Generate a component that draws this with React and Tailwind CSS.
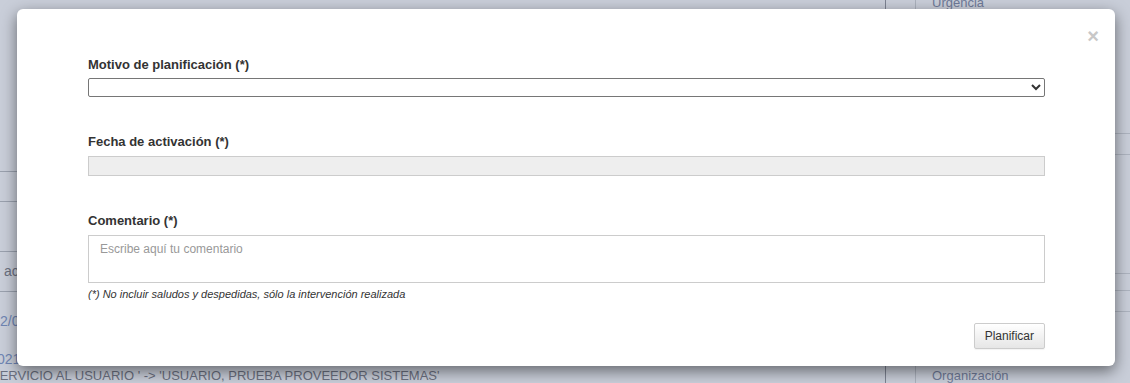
export default function App() {
  return (
    <div className="relative w-[1130px] h-[383px] overflow-hidden bg-[#c9ced9] font-['Liberation_Sans',Arial,sans-serif]">
      {/* page under the overlay */}
      <div className="flex h-full">
        <div className="w-[886px] flex flex-col border-r border-[#7c8291] text-[13px] text-[#6b7080]">
          <div className="h-[173px] border-b border-[#9aa1ae]" />
          <div className="h-[31px] border-b border-[#9aa1ae]" />
          <div className="h-[50px] border-b border-[#9aa1ae]" />
          <div className="h-[40px] border-b border-[#9aa1ae] flex items-center pl-[4px] text-[14px]">ac</div>
          <div className="h-[78px] flex flex-col text-[14px] text-[#6f85b3]">
            <div className="pt-[22px] leading-[14px]">2/0</div>
            <div className="pt-[24px] leading-[14px] ml-[-3px]">021</div>
          </div>
          <div className="ml-[-9px] leading-[14px] text-[13px] whitespace-nowrap">SERVICIO AL USUARIO ' -&gt; 'USUARIO, PRUEBA PROVEEDOR SISTEMAS'</div>
        </div>
        <div className="w-[30px] border-r border-[#aab0bc]" />
        <div className="flex-1 flex flex-col text-[13px] text-[#6f7a98]">
          <div className="pl-[16px] mt-[-4px] leading-[14px]">Urgencia</div>
          <div className="h-[126px] border-b border-[#adb3bf]" />
          <div className="h-[22px] border-b border-[#adb3bf]" />
          <div className="h-[121px] border-b border-[#adb3bf]" />
          <div className="h-[18px] border-b border-[#adb3bf]" />
          <div className="h-[21px] border-b border-[#adb3bf]" />
          <div className="pl-[16px] mt-[57px] leading-[14px]">Organización</div>
        </div>
      </div>

      {/* modal */}
      <div className="absolute inset-0">
        <div className="ml-[17px] mt-[9px] w-[1098px] h-[357px] bg-white rounded-[6px] shadow-[0_5px_15px_rgba(0,0,0,0.5)] relative">
          <button className="absolute right-[16px] top-[17px] text-[20px] font-bold leading-none text-[#c8c8c8]">×</button>
          <div className="pl-[71px] pr-[70px] pt-[47px] text-[#333]">
            <label className="block text-[13px] font-bold leading-[17px]">Motivo de planificación (*)</label>
            <select className="mt-[5px] block w-full h-[19px] border border-[#767676] rounded-[2px] text-[12px] bg-white" />

            <label className="block mt-[36px] text-[13px] font-bold leading-[17px]">Fecha de activación (*)</label>
            <div className="mt-[6px] h-[20px] w-full bg-[#eeeeee] border border-[#cccccc]" />

            <label className="block mt-[36px] text-[13px] font-bold leading-[17px]">Comentario (*)</label>
            <textarea
              className="mt-[6px] block w-full h-[48px] border border-[#cccccc] px-[11px] py-[6px] text-[12px] leading-[14px] resize-none placeholder:text-[#999]"
              placeholder="Escribe aquí tu comentario"
            />
            <p className="mt-[4px] text-[11px] italic leading-[14px]">(*) No incluir saludos y despedidas, sólo la intervención realizada</p>

            <div className="flex justify-end mt-[22px]">
              <button className="h-[26px] px-[10px] text-[12px] text-[#333] border border-[#cccccc] rounded-[2px] bg-gradient-to-b from-white to-[#e6e6e6] shadow-[0_1px_1px_rgba(0,0,0,0.05)]">
                Planificar
              </button>
            </div>
          </div>
        </div>
      </div>
    </div>
  )
}
